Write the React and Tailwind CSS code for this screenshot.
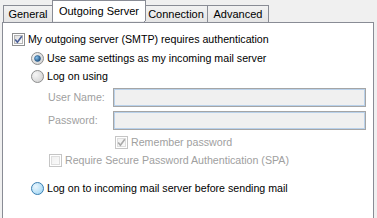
import React from "react";

function CheckBox({ checked, disabled }) {
    const border = disabled ? "#c5c5c5" : "#8e8f8f";
    const mark = disabled ? "#a9a9a9" : "#4a5f97";
    return (
        <svg width="13" height="13" viewBox="0 0 13 13" className="shrink-0">
            <defs>
                <linearGradient id={disabled ? "cbd" : "cbe"} x1="0" y1="0" x2="1" y2="1">
                    <stop offset="0" stopColor={disabled ? "#f0f0f0" : "#dcdcdc"} />
                    <stop offset="1" stopColor={disabled ? "#fbfbfb" : "#ffffff"} />
                </linearGradient>
            </defs>
            <rect x="0.5" y="0.5" width="12" height="12" fill="#ffffff" stroke={border} />
            <rect x="2.5" y="2.5" width="8" height="8" fill={`url(#${disabled ? "cbd" : "cbe"})`} stroke={disabled ? "#dedede" : "#b5b5b5"} strokeWidth="1" />
            {checked && (
                <path d="M3.2 6.6 L5.4 9.2 L9.8 3.2" fill="none" stroke={mark} strokeWidth="1.6" />
            )}
        </svg>
    );
}

function Radio({ checked, hover }) {
    const id = checked ? "rs" : hover ? "rh" : "rn";
    return (
        <svg width="13" height="13" viewBox="0 0 13 13" className="shrink-0">
            <defs>
                <radialGradient id={id} cx="0.35" cy="0.35" r="0.7">
                    <stop offset="0" stopColor={hover ? "#eaf6fd" : "#f6f6f6"} />
                    <stop offset="1" stopColor={hover ? "#a7d9f5" : "#d4d4d4"} />
                </radialGradient>
                <radialGradient id="rdot" cx="0.35" cy="0.35" r="0.7">
                    <stop offset="0" stopColor="#8ac4ee" />
                    <stop offset="1" stopColor="#1b4e7f" />
                </radialGradient>
            </defs>
            <circle cx="6.5" cy="6.5" r="6" fill={`url(#${id})`} stroke={hover ? "#3c7fb1" : "#8e8f8f"} />
            {checked && <circle cx="6.5" cy="6.5" r="3" fill="url(#rdot)" stroke="#2a5d8c" strokeWidth="0.6" />}
        </svg>
    );
}

function Tab({ label, selected, width }) {
    if (selected) {
        return (
            <div
                className={`${width} h-[21px] -mx-[1px] z-10 bg-white border border-b-0 border-[#898c95] flex items-start justify-center pt-[5px]`}
            >
                {label}
            </div>
        );
    }
    return (
        <div
            className={`${width} h-[17px] bg-gradient-to-b from-[#f2f2f2] to-[#e5e5e5] border border-b-0 border-[#898c95] flex items-center justify-center -ml-[1px] first:ml-0`}
        >
            {label}
        </div>
    );
}

export default function App() {
    return (
        <div className="w-[377px] h-[218px] overflow-hidden bg-[#f0f0f0] text-[11px] text-black font-['Liberation_Sans',Arial,sans-serif] leading-none">
            <div className="flex items-end h-[22px] pl-[3px] relative">
                <Tab label="General" width="w-[50px]" />
                <div className="h-[22px] flex items-start">
                    <Tab label="Outgoing Server" selected width="w-[94px]" />
                </div>
                <Tab label="Connection" width="w-[64px]" />
                <Tab label="Advanced" width="w-[62px]" />
            </div>

            <div className="ml-[2px] w-[372px] h-[200px] bg-white border border-[#898c95] pt-[7px] text-[10.65px]">
                <div className="flex items-center h-[18px] pl-[9px] gap-[3px]">
                    <CheckBox checked />
                    <span>My outgoing server (SMTP) requires authentication</span>
                </div>

                <div className="flex items-center h-[18px] mt-[1px] pl-[28px] gap-[3px]">
                    <Radio checked />
                    <span>Use same settings as my incoming mail server</span>
                </div>

                <div className="flex items-center h-[18px] pl-[28px] gap-[3px]">
                    <Radio />
                    <span>Log on using</span>
                </div>

                <div className="flex items-center h-[19px] mt-[3px] pl-[45px]">
                    <span className="w-[65px] text-[#a0a0a0]">User Name:</span>
                    <div className="w-[253px] h-[19px] border border-[#a5a5a5] bg-[#f0f0f0] shadow-[inset_0_0_0_1px_#b9d1ea]" />
                </div>

                <div className="flex items-center h-[19px] mt-[4px] pl-[45px]">
                    <span className="w-[65px] text-[#a0a0a0]">Password:</span>
                    <div className="w-[253px] h-[19px] border border-[#a5a5a5] bg-[#f0f0f0] shadow-[inset_0_0_0_1px_#b9d1ea]" />
                </div>

                <div className="flex items-center h-[18px] mt-[3px] pl-[112px] gap-[3px] text-[#a0a0a0]">
                    <CheckBox checked disabled />
                    <span>Remember password</span>
                </div>

                <div className="flex items-center h-[18px] pl-[46px] gap-[3px] text-[#a0a0a0]">
                    <CheckBox disabled />
                    <span>Require Secure Password Authentication (SPA)</span>
                </div>

                <div className="flex items-center h-[18px] mt-[10px] pl-[28px] gap-[3px]">
                    <Radio hover />
                    <span>Log on to incoming mail server before sending mail</span>
                </div>
            </div>
        </div>
    );
}
